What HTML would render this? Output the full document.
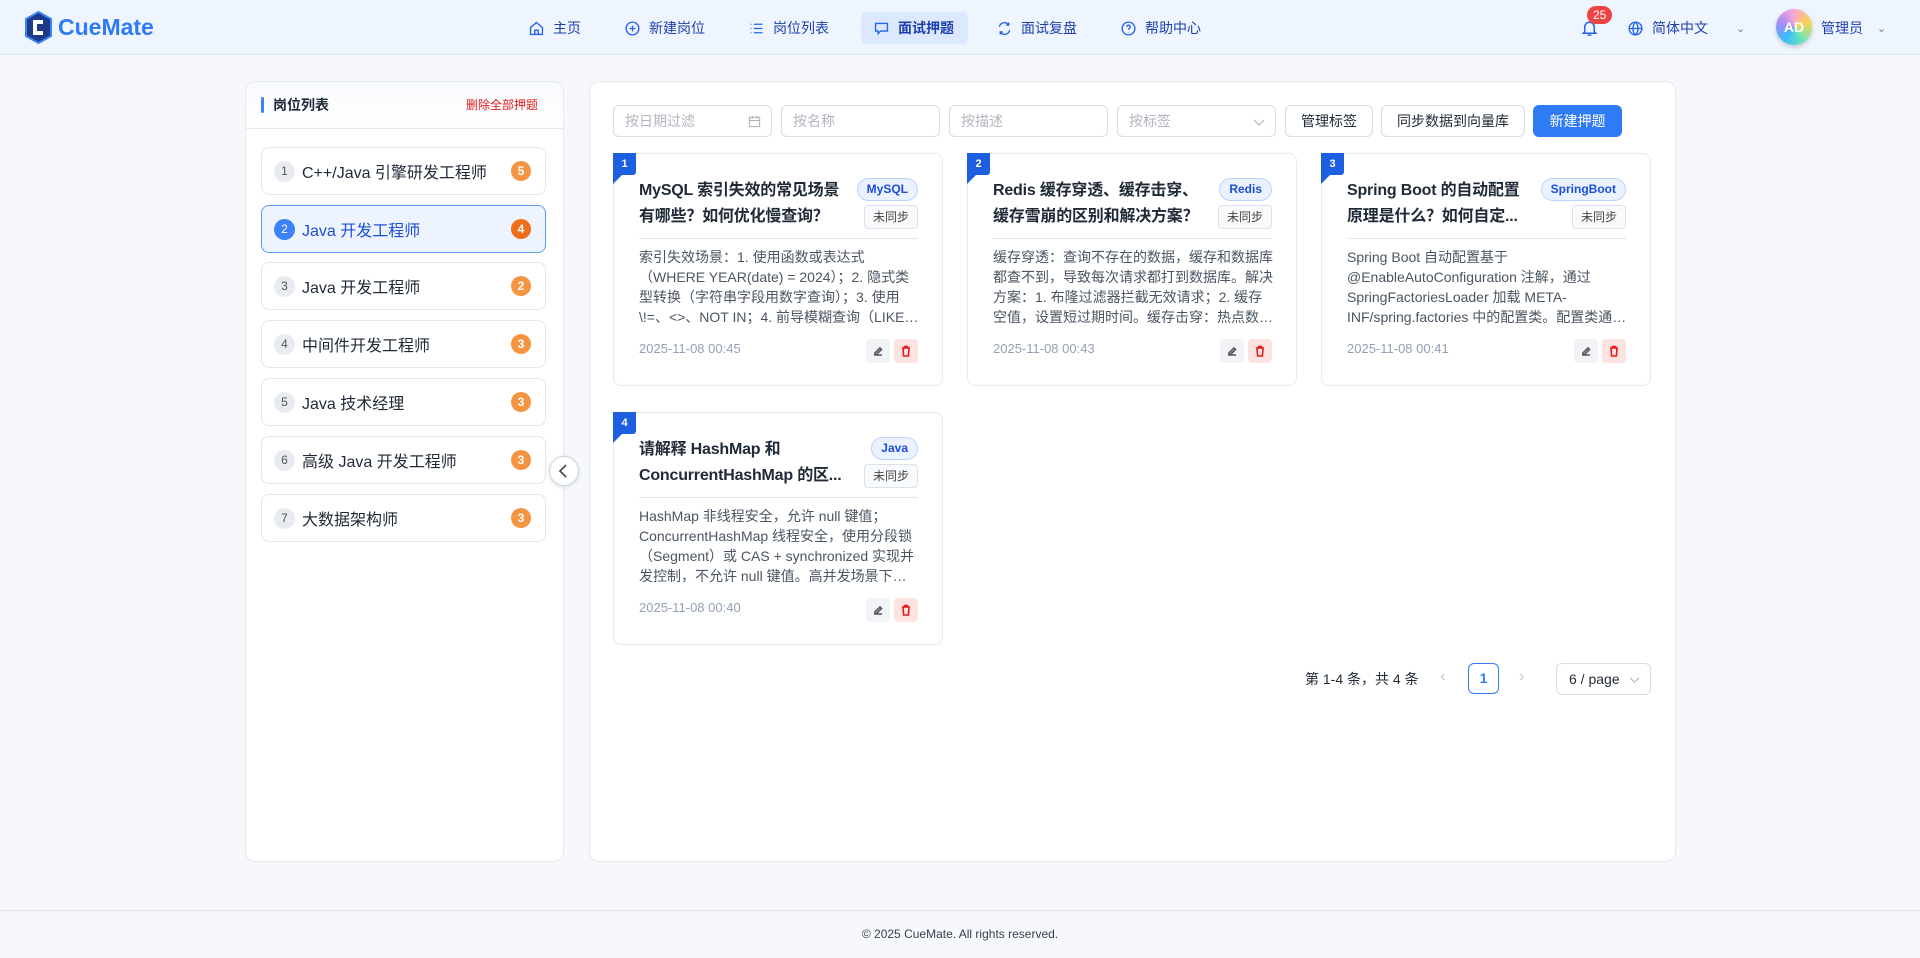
<!DOCTYPE html>
<html><head><meta charset="utf-8"><style>
*{box-sizing:border-box;margin:0;padding:0}
body{width:1920px;height:958px;background:#f6f8fb;font-family:"Liberation Sans","Noto Sans CJK SC",sans-serif;color:#1f2937;position:relative;overflow:hidden}
.abs{position:absolute}
.hdr{left:0;top:0;width:1920px;height:55px;background:#eef5ff;border-bottom:1px solid #dfe6f0}
.nav{position:absolute;top:12px;height:32px;display:flex;align-items:center;font-size:14px;color:#1e40af;gap:8px}
.nav svg{width:17px;height:17px;stroke:#2563eb;fill:none;stroke-width:1.6}
.navact{background:#dbe8fd;border-radius:6px;padding:0 12px;font-weight:bold}
.panel{background:#fff;border:1px solid #e5e9f0;border-radius:10px}
.item{position:absolute;left:261px;width:285px;height:48px;border:1px solid #e3e7ee;border-radius:8px;background:#fff;display:flex;align-items:center;font-size:16px;color:#1f2937}
.item .n{width:21px;height:21px;border-radius:50%;background:#e8ecf2;color:#555;font-size:12px;display:flex;align-items:center;justify-content:center;margin-left:12px;margin-right:7px}
.item .c{position:absolute;right:14px;width:20px;height:20px;border-radius:50%;background:#f59541;color:#fff;font-size:12px;font-weight:bold;display:flex;align-items:center;justify-content:center}
.item.act{background:#edf4ff;border-color:#5b9cf5;color:#1d4ed8}
.item.act .n{background:#3b82f6;color:#fff}
.item.act .c{background:#f06d1a}
.inp{position:absolute;top:105px;height:32px;border:1px solid #d9dde3;border-radius:6px;font-size:14px;color:#b0b5bd;padding:0 11px;line-height:30px;background:#fff}
.btn{position:absolute;top:105px;height:32px;border:1px solid #d9dde3;border-radius:6px;font-size:14px;color:#1f2937;line-height:30px;text-align:center;background:#fff}
.card{position:absolute;width:330px;height:233px;background:#fff;border:1px solid #e7eaf0;border-radius:8px}
.bd{position:absolute;left:-1px;top:-1px;width:23px;height:22px;background:#1d5fe0;color:#fff;font-size:11px;font-weight:bold;text-align:center;line-height:22px;border-radius:0 0 3px 0}
.bd:after{content:"";position:absolute;left:0;top:22px;border-top:9px solid #1d5fe0;border-right:9px solid transparent}
.tt{position:absolute;left:25px;top:24px;width:215px;font-size:16px;font-weight:bold;line-height:26px;color:#1f2937;white-space:nowrap;letter-spacing:-0.2px}
.pill{position:absolute;right:24px;top:24px;height:23px;border:1px solid #bcd3fb;background:#eaf2ff;border-radius:12px;color:#1d4ed8;font-size:12px;font-weight:bold;padding:0 9px;line-height:21px}
.sy{position:absolute;right:24px;top:51px;height:24px;border:1px solid #dde2ea;background:#f8fafc;border-radius:4px;color:#444;font-size:12px;padding:0 8px;line-height:22px}
.dv{position:absolute;left:25px;right:24px;top:84px;border-top:1px solid #e2e6ec}
.ds{position:absolute;left:25px;width:281px;top:93px;font-size:14px;line-height:20px;color:#4b5563;display:-webkit-box;-webkit-line-clamp:4;-webkit-box-orient:vertical;overflow:hidden}
.dt{position:absolute;left:25px;top:187px;font-size:13px;color:#94a0b4}
.ed,.dl{position:absolute;top:185px;width:24px;height:24px;border-radius:4px;display:flex;align-items:center;justify-content:center}
.ed{right:52px;background:#f1f3f6}.dl{right:24px;background:#fde2e2}
.ed svg,.dl svg{width:12px;height:12px;fill:none;stroke-width:1.6}
</style></head><body>
<div class="abs hdr"></div>
<div class="abs" style="left:24px;top:11px;display:flex;align-items:center;gap:5px">
<svg width="29" height="33" viewBox="0 0 29 33"><polygon points="14.5,1 27,8 27,25 14.5,32 2,25 2,8" fill="#1e3a8a" stroke="#3b82f6" stroke-width="2"/><path d="M19 11h-8v11h8" stroke="#fff" stroke-width="4" fill="none"/></svg>
<span style="font-size:23px;font-weight:bold;color:#2f7bf6">CueMate</span></div>
<div class="nav" style="left:528px"><svg viewBox="0 0 20 20"><path d="M3 9l7-6 7 6v8H3z M8 17v-5h4v5"/></svg>主页</div>
<div class="nav" style="left:624px"><svg viewBox="0 0 20 20"><circle cx="10" cy="10" r="7.5"/><path d="M10 6.5v7M6.5 10h7"/></svg>新建岗位</div>
<div class="nav" style="left:748px"><svg viewBox="0 0 20 20"><path d="M3 5h1M7 5h10M3 10h1M7 10h10M3 15h1M7 15h10"/></svg>岗位列表</div>
<div class="nav navact" style="left:861px;width:107px"><svg viewBox="0 0 20 20"><path d="M3 4h14v9H9l-3 3v-3H3z"/></svg>面试押题</div>
<div class="nav" style="left:996px"><svg viewBox="0 0 20 20"><path d="M4 8a6 6 0 0 1 11-2M16 12a6 6 0 0 1-11 2M15 3v3h-3M5 17v-3h3"/></svg>面试复盘</div>
<div class="nav" style="left:1120px"><svg viewBox="0 0 20 20"><circle cx="10" cy="10" r="7.5"/><path d="M8 8a2 2 0 1 1 2.5 2v1.5M10 14v.5"/></svg>帮助中心</div>
<svg class="abs" style="left:1580px;top:18px" width="19" height="20" viewBox="0 0 20 20" fill="none" stroke="#2563eb" stroke-width="1.6"><path d="M5 14V9a5 5 0 0 1 10 0v5l1.5 1.5h-13zM8 17.5h4"/></svg>
<div class="abs" style="left:1587px;top:6px;height:18px;padding:0 6px;background:#ef4444;color:#fff;border-radius:9px;font-size:12px;line-height:18px">25</div>
<div class="nav" style="left:1627px"><svg viewBox="0 0 20 20"><circle cx="10" cy="10" r="7.5"/><path d="M2.5 10h15M10 2.5c-4 4-4 11 0 15M10 2.5c4 4 4 11 0 15"/></svg>简体中文<span style="margin-left:20px;color:#6b7da8;font-size:11px">&#8964;</span></div>
<div class="abs" style="left:1776px;top:9px;width:36px;height:36px;border-radius:50%;background:conic-gradient(#f9a8d4,#fcd34d,#6ee7b7,#38bdf8,#a78bfa,#f9a8d4);color:#fff;font-weight:bold;font-size:14px;text-align:center;line-height:36px;box-shadow:0 2px 5px rgba(0,0,0,.2)">AD</div>
<div class="nav" style="left:1821px">管理员<span style="margin-left:6px;color:#6b7da8;font-size:11px">&#8964;</span></div>

<div class="abs panel" style="left:245px;top:81px;width:319px;height:781px"></div>
<div class="abs" style="left:246px;top:82px;width:317px;height:47px;border-bottom:1px solid #e5e9f0;background:linear-gradient(#f8fafd,#fff);border-radius:10px 10px 0 0"></div>
<div class="abs" style="left:261px;top:97px;width:3px;height:16px;background:#3b82f6;border-radius:2px"></div>
<div class="abs" style="left:273px;top:95px;font-size:14px;font-weight:bold">岗位列表</div>
<div class="abs" style="left:466px;top:96px;font-size:12px;color:#e11d1d">删除全部押题</div>
<div class="item" style="top:147px"><span class="n">1</span>C++/Java 引擎研发工程师<span class="c">5</span></div>
<div class="item act" style="top:205px"><span class="n">2</span>Java 开发工程师<span class="c">4</span></div>
<div class="item" style="top:262px"><span class="n">3</span>Java 开发工程师<span class="c">2</span></div>
<div class="item" style="top:320px"><span class="n">4</span>中间件开发工程师<span class="c">3</span></div>
<div class="item" style="top:378px"><span class="n">5</span>Java 技术经理<span class="c">3</span></div>
<div class="item" style="top:436px"><span class="n">6</span>高级 Java 开发工程师<span class="c">3</span></div>
<div class="item" style="top:494px"><span class="n">7</span>大数据架构师<span class="c">3</span></div>
<div class="abs" style="left:549px;top:456px;width:30px;height:30px;border-radius:50%;background:#fff;border:1px solid #c9d3e0;box-shadow:0 1px 4px rgba(0,0,0,.12)"><svg width="28" height="28" viewBox="0 0 28 28" fill="none" stroke="#444" stroke-width="1.6"><path d="M16 8l-6 6 6 6"/></svg></div>

<div class="abs panel" style="left:589px;top:81px;width:1087px;height:781px"></div>
<div class="inp" style="left:613px;width:159px">按日期过滤<svg style="position:absolute;right:10px;top:9px" width="13" height="13" viewBox="0 0 14 14" fill="none" stroke="#b0b5bd" stroke-width="1.2"><rect x="1.5" y="2.5" width="11" height="10"/><path d="M1.5 6h11M4.5 1v3M9.5 1v3"/></svg></div>
<div class="inp" style="left:781px;width:159px">按名称</div>
<div class="inp" style="left:949px;width:159px">按描述</div>
<div class="inp" style="left:1117px;width:159px">按标签<svg style="position:absolute;right:10px;top:11px" width="12" height="10" viewBox="0 0 12 10" fill="none" stroke="#b0b5bd" stroke-width="1.2"><path d="M1 3l5 5 5-5"/></svg></div>
<div class="btn" style="left:1285px;width:88px">管理标签</div>
<div class="btn" style="left:1381px;width:144px">同步数据到向量库</div>
<div class="btn" style="left:1533px;width:89px;background:#2f7bf6;border-color:#2f7bf6;color:#fff">新建押题</div>

<div class="card" style="left:613px;top:153px"><div class="bd">1</div><div class="tt">MySQL 索引失效的常见场景<br>有哪些？如何优化慢查询？</div><div class="pill">MySQL</div><div class="sy">未同步</div><div class="dv"></div><div class="ds">索引失效场景：1. 使用函数或表达式（WHERE YEAR(date) = 2024）；2. 隐式类型转换（字符串字段用数字查询）；3. 使用 \!=、&lt;&gt;、NOT IN；4. 前导模糊查询（LIKE '%abc'）；5. 联合索引不满足最左前缀</div><div class="dt">2025-11-08 00:45</div><div class="ed"><svg viewBox="0 0 12 12" stroke="#555"><path d="M2 10h8M3 8l5-5 1.5 1.5-5 5H3z"/></svg></div><div class="dl"><svg viewBox="0 0 12 12" stroke="#e11d1d"><path d="M2 3h8M4.5 3V1.5h3V3M3 3l.6 8h4.8L9 3"/></svg></div></div>
<div class="card" style="left:967px;top:153px"><div class="bd">2</div><div class="tt">Redis 缓存穿透、缓存击穿、<br>缓存雪崩的区别和解决方案？</div><div class="pill">Redis</div><div class="sy">未同步</div><div class="dv"></div><div class="ds">缓存穿透：查询不存在的数据，缓存和数据库都查不到，导致每次请求都打到数据库。解决方案：1. 布隆过滤器拦截无效请求；2. 缓存空值，设置短过期时间。缓存击穿：热点数据过期瞬间大量请求</div><div class="dt">2025-11-08 00:43</div><div class="ed"><svg viewBox="0 0 12 12" stroke="#555"><path d="M2 10h8M3 8l5-5 1.5 1.5-5 5H3z"/></svg></div><div class="dl"><svg viewBox="0 0 12 12" stroke="#e11d1d"><path d="M2 3h8M4.5 3V1.5h3V3M3 3l.6 8h4.8L9 3"/></svg></div></div>
<div class="card" style="left:1321px;top:153px"><div class="bd">3</div><div class="tt">Spring Boot 的自动配置<br>原理是什么？如何自定...</div><div class="pill">SpringBoot</div><div class="sy">未同步</div><div class="dv"></div><div class="ds">Spring Boot 自动配置基于 @EnableAutoConfiguration 注解，通过 SpringFactoriesLoader 加载 META-INF/spring.factories 中的配置类。配置类通过条件注解决定是否生效</div><div class="dt">2025-11-08 00:41</div><div class="ed"><svg viewBox="0 0 12 12" stroke="#555"><path d="M2 10h8M3 8l5-5 1.5 1.5-5 5H3z"/></svg></div><div class="dl"><svg viewBox="0 0 12 12" stroke="#e11d1d"><path d="M2 3h8M4.5 3V1.5h3V3M3 3l.6 8h4.8L9 3"/></svg></div></div>
<div class="card" style="left:613px;top:412px"><div class="bd">4</div><div class="tt">请解释 HashMap 和<br>ConcurrentHashMap 的区...</div><div class="pill">Java</div><div class="sy">未同步</div><div class="dv"></div><div class="ds">HashMap 非线程安全，允许 null 键值；ConcurrentHashMap 线程安全，使用分段锁（Segment）或 CAS + synchronized 实现并发控制，不允许 null 键值。高并发场景下应使用 ConcurrentHashMap</div><div class="dt">2025-11-08 00:40</div><div class="ed"><svg viewBox="0 0 12 12" stroke="#555"><path d="M2 10h8M3 8l5-5 1.5 1.5-5 5H3z"/></svg></div><div class="dl"><svg viewBox="0 0 12 12" stroke="#e11d1d"><path d="M2 3h8M4.5 3V1.5h3V3M3 3l.6 8h4.8L9 3"/></svg></div></div>

<div class="abs" style="left:1305px;top:669px;font-size:14px;color:#1f2937">第 1-4 条，共 4 条</div>
<div class="abs" style="left:1440px;top:668px;font-size:16px;color:#c4c8ce">&#8249;</div>
<div class="abs" style="left:1468px;top:663px;width:31px;height:31px;border:1px solid #2f7bf6;border-radius:6px;color:#2f7bf6;font-size:14px;font-weight:bold;text-align:center;line-height:29px">1</div>
<div class="abs" style="left:1519px;top:668px;font-size:16px;color:#c4c8ce">&#8250;</div>
<div class="abs" style="left:1556px;top:663px;width:95px;height:32px;border:1px solid #d9dde3;border-radius:6px;font-size:14px;line-height:30px;padding-left:12px;background:#fff">6 / page<svg style="position:absolute;right:10px;top:11px" width="11" height="9" viewBox="0 0 12 10" fill="none" stroke="#b0b5bd" stroke-width="1.2"><path d="M1 3l5 5 5-5"/></svg></div>

<div class="abs" style="left:0;top:910px;width:1920px;height:48px;border-top:1px solid #e3e7ed;background:#f6f8fb;text-align:center;font-size:12px;color:#374151;line-height:46px">© 2025 CueMate. All rights reserved.</div>
</body></html>
